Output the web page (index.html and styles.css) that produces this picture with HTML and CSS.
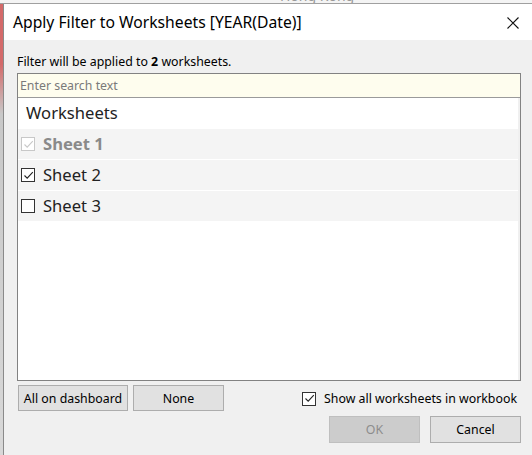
FILE: index.html
```html
<!DOCTYPE html>
<html>
<head>
<meta charset="utf-8">
<link rel="stylesheet" href="styles.css">
</head>
<body>
<div class="screen">
  <div class="top-strip"><span class="bg-text">Hong Kong</span></div>
  <div class="main-row">
    <div class="left-strip"></div>
    <div class="dialog">
      <div class="titlebar">
        <span class="title">Apply Filter to Worksheets [YEAR(Date)]</span>
        <svg class="close" width="12" height="12" viewBox="0 0 12 12"><path d="M0.5 0.5 L11.5 11.5 M11.5 0.5 L0.5 11.5" stroke="#111" stroke-width="1.1" fill="none"/></svg>
      </div>
      <div class="content">
        <div class="info">Filter will be applied to <b>2</b> worksheets.</div>
        <div class="listbox">
          <div class="search">Enter search text</div>
          <div class="list">
            <div class="list-header">Worksheets</div>
            <div class="item disabled">
              <span class="cb cb-disabled"><svg width="11" height="11" viewBox="0 0 11 11"><path d="M1.5 5.5 L4.2 8.2 L9.8 2.2" stroke="#c8c8c8" stroke-width="1.1" fill="none"/></svg></span>
              <span class="label">Sheet 1</span>
            </div>
            <div class="item">
              <span class="cb"><svg width="11" height="11" viewBox="0 0 11 11"><path d="M1.5 5.5 L4.2 8.2 L9.8 2.2" stroke="#222" stroke-width="1.1" fill="none"/></svg></span>
              <span class="label">Sheet 2</span>
            </div>
            <div class="item">
              <span class="cb"></span>
              <span class="label">Sheet 3</span>
            </div>
          </div>
        </div>
        <div class="row1">
          <div class="left-buttons">
            <button class="btn btn-all">All on dashboard</button>
            <button class="btn btn-none">None</button>
          </div>
          <label class="show-all">
            <span class="cb cb-small"><svg width="11" height="11" viewBox="0 0 11 11"><path d="M1.5 5.5 L4.2 8.2 L9.8 2.2" stroke="#222" stroke-width="1.1" fill="none"/></svg></span>
            <span>Show all worksheets in workbook</span>
          </label>
        </div>
        <div class="row2">
          <button class="btn btn-ok" disabled>OK</button>
          <button class="btn btn-cancel">Cancel</button>
        </div>
      </div>
    </div>
  </div>
</div>
</body>
</html>
```
FILE: styles.css
```css
* { box-sizing: border-box; }
html, body { margin: 0; padding: 0; }
body {
  width: 532px;
  height: 455px;
  overflow: hidden;
  font-family: "Noto Sans", "Liberation Sans", sans-serif;
  background: #ececec;
}
.screen {
  display: flex;
  flex-direction: column;
  height: 455px;
}
.top-strip {
  height: 3px;
  overflow: hidden;
  background: #f4f4f4;
  border-bottom: 1px solid #a0a0a0;
  box-sizing: content-box;
}
.bg-text {
  display: block;
  margin-top: -11px;
  margin-left: 280px;
  font-size: 14px;
  line-height: 14px;
  color: #999;
}
.main-row {
  flex: 1;
  display: flex;
}
.left-strip {
  width: 3px;
  background: linear-gradient(#d46a6a 0, #d46a6a 60px, #c8c8c8 110px, #d8d8d8 100%);
  border-right: 1px solid #8a8a8a;
  box-sizing: content-box;
}
.dialog {
  flex: 1;
  display: flex;
  flex-direction: column;
  background: #f0f0f0;
}
.titlebar {
  height: 36px;
  background: #fff;
  display: flex;
  align-items: center;
  justify-content: space-between;
  padding-left: 9px;
  padding-right: 13px;
}
.title {
  font-size: 15.7px;
  color: #000;
}
.close { margin-top: 1px; }
.content {
  flex: 1;
  padding: 0 11px 0 13px;
  display: flex;
  flex-direction: column;
}
.info {
  font-size: 12.35px;
  color: #000;
  height: 33px;
  padding-top: 14px;
  line-height: 16px;
}
.listbox {
  height: 308px;
  border: 1px solid #828282;
  background: #fff;
  display: flex;
  flex-direction: column;
}
.search {
  height: 24px;
  background: #fefdee;
  border-bottom: 1px solid #9a9a9a;
  font-size: 12.35px;
  color: #7a7a7a;
  padding-left: 2px;
  line-height: 23px;
}
.list {
  flex: 1;
  background: #fff;
  border-right: 2px solid #f0f0f0;
}
.list-header {
  height: 31px;
  font-size: 16.6px;
  line-height: 30px;
  padding-left: 8px;
  color: #222;
}
.item {
  height: 31px;
  background: #f4f4f4;
  border-bottom: 1px solid #fff;
  display: flex;
  align-items: center;
  padding-left: 3px;
}
.item .label {
  font-size: 16.6px;
  color: #222;
  margin-left: 8px;
  margin-top: -1px;
}
.item.disabled .label {
  font-weight: bold;
  color: #8a8a8a;
}
.cb {
  width: 14px;
  height: 14px;
  border: 1px solid #333;
  background: #fff;
  display: flex;
  align-items: center;
  justify-content: center;
  flex: none;
}
.cb-disabled {
  border-color: #c8c8c8;
}
.row1 {
  display: flex;
  justify-content: space-between;
  align-items: center;
  margin-top: 4px;
  height: 26px;
}
.left-buttons {
  display: flex;
  gap: 5px;
  padding-left: 1px;
}
.btn {
  font-family: inherit;
  font-size: 12.35px;
  color: #000;
  background: #e1e1e1;
  border: 1px solid #adadad;
  height: 26px;
  padding: 0;
  margin: 0;
}
.btn-all { width: 110px; }
.btn-none { width: 91px; }
.show-all {
  display: flex;
  align-items: center;
  font-size: 12.35px;
  color: #000;
  padding-right: 4px;
  padding-top: 1px;
}
.show-all .cb { margin-right: 8px; }
.row2 {
  display: flex;
  justify-content: flex-end;
  gap: 10px;
  margin-top: 5px;
}
.btn-ok, .btn-cancel {
  width: 91px;
  height: 27px;
}
.btn-ok {
  background: #cccccc;
  border-color: #bfbfbf;
  color: #8c8c8c;
}
```
